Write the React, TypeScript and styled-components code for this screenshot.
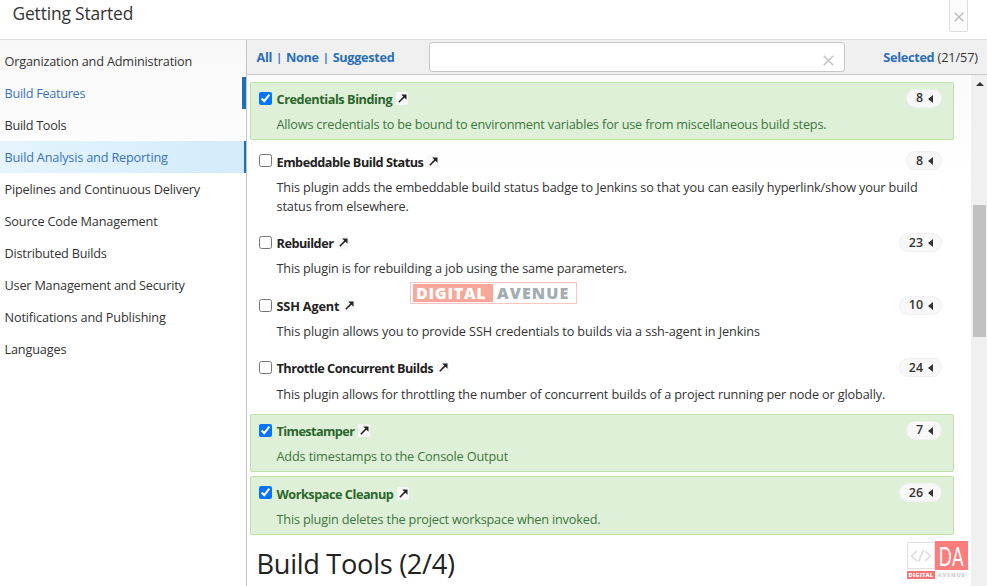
import React from "react";
import styled, { createGlobalStyle } from "styled-components";

const GlobalStyle = createGlobalStyle`
  * { box-sizing: border-box; }
  body {
    margin: 0;
    overflow: hidden;
    background: #fff;
    color: #333;
    font-family: "Open Sans", "Noto Sans", sans-serif;
    font-size: 12.7px;
  }
`;

const Dialog = styled.div`
  display: flex;
  flex-direction: column;
  width: 987px;
  height: 586px;
  overflow: hidden;
`;

const Header = styled.header`
  display: flex;
  justify-content: space-between;
  align-items: flex-start;
  flex: 0 0 40px;
  padding: 0 19px 0 12.5px;
  border-bottom: 1px solid #ddd;
`;

const DialogTitle = styled.h1`
  margin: 0;
  font-size: 17.4px;
  font-weight: 400;
  line-height: 26px;
  letter-spacing: -0.15px;
  color: #333;
`;

const CloseButton = styled.button`
  display: flex;
  align-items: flex-end;
  justify-content: center;
  width: 19px;
  height: 32px;
  padding: 0 0 9px;
  border: 1px solid #ddd;
  border-top: 0;
  border-radius: 0 0 2px 2px;
  background: #fcfcfc;
  color: #bbb;
`;

const Body = styled.div`
  display: flex;
  flex: 1;
  min-height: 0;
`;

const Sidebar = styled.nav`
  flex: 0 0 247px;
  padding-top: 5px;
  border-right: 1px solid #c6c6c6;
  background: linear-gradient(#f8f8f8, #fff 150px);
`;

const Category = styled.a<{ $bar?: number; $hover?: boolean; $ls?: number }>`
  display: block;
  height: 32px;
  padding-left: 4.5px;
  line-height: 32px;
  white-space: nowrap;
  letter-spacing: ${(p) => p.$ls ?? -0.2}px;
  color: ${(p) => (p.$bar ? "#3a74b8" : "#333")};
  border-right: ${(p) => p.$bar ?? 0}px solid #1f6fb5;
  background: ${(p) => (p.$hover ? "linear-gradient(90deg, #e6f4fd, #d3ebfa)" : "transparent")};
`;

const Main = styled.main`
  display: flex;
  flex-direction: column;
  flex: 1;
  min-width: 0;
`;

const Toolbar = styled.div`
  display: flex;
  align-items: center;
  flex: 0 0 35px;
  padding: 0 9px 0 9.5px;
  border-bottom: 1px solid #c8c8c8;
  background: #f0f0f0;
`;

const Filters = styled.div`
  display: flex;
  width: 172.5px;
  gap: 4.2px;
  color: #2a6fb5;
  font-weight: 700;
  letter-spacing: -0.3px;
`;

const Divider = styled.span`
  font-size: 10.5px;
  line-height: 18px;
`;

const SearchBox = styled.div`
  display: flex;
  align-items: center;
  justify-content: flex-end;
  width: 416px;
  height: 30px;
  padding: 6px 10px 0 0;
  border: 1px solid #c6c6c6;
  border-radius: 3px;
  background: #fff;
  color: #c4c4c4;
`;

const Selected = styled.div`
  margin-left: auto;
  letter-spacing: -0.1px;
  b { color: #2a6fb5; font-weight: 700; letter-spacing: -0.3px; }
`;

const Content = styled.div`
  display: flex;
  flex: 1;
  min-height: 0;
`;

const Plugins = styled.section`
  flex: 1;
  padding: 6.7px 17px 0 3px;
  background: linear-gradient(#fbfbfb, #fff 110px);
`;

const Plugin = styled.article<{ $on?: boolean }>`
  display: grid;
  grid-template-columns: 17.5px 1fr auto;
  margin-bottom: 4px;
  padding: 6.2px 11.5px 3px 8px;
  border: 1px solid ${(p) => (p.$on ? "#bfe0a8" : "transparent")};
  border-radius: 2px;
  background: ${(p) => (p.$on ? "#dff0d8" : "transparent")};
  color: ${(p) => (p.$on ? "#3c763d" : "#333")};
`;

const Check = styled.input`
  width: 13px;
  height: 13px;
  margin: 3px 0 0;
`;

const PluginTitle = styled.h3<{ $on?: boolean; $ls: number }>`
  display: flex;
  align-items: center;
  height: 20.4px;
  gap: 4px;
  margin: 0;
  font-size: 12.7px;
  font-weight: 700;
  letter-spacing: ${(p) => p.$ls}px;
  color: ${(p) => (p.$on ? "#2b662c" : "#222")};
`;

const ExternalLink = styled.span`
  display: flex;
  align-items: center;
  justify-content: center;
  width: 12px;
  height: 13px;
  margin-top: -1px;
  border-radius: 2px;
  background: #f8f8f8;
`;

const Badge = styled.span`
  display: flex;
  align-items: center;
  justify-content: flex-end;
  gap: 4.5px;
  height: 19px;
  padding: 0 8px 1px 9px;
  border: 1px solid #f0f0f0;
  border-radius: 10px;
  background: #f8f8f8;
  color: #333;
  font-size: 12.4px;
  font-weight: 600;
`;

const Arrow = styled.i`
  margin-top: 2px;
  border: 4px solid transparent;
  border-right: 5px solid #333;
  border-left: 0;
`;

const Description = styled.p<{ $ls: number }>`
  grid-column: 2 / 4;
  margin: 0;
  padding: 6px 0 2px;
  line-height: 19px;
  white-space: pre;
  letter-spacing: ${(p) => p.$ls}px;
`;

const SectionTitle = styled.h2`
  margin: 8px 0 0 6.5px;
  font-size: 27.2px;
  font-weight: 400;
  line-height: 41px;
  letter-spacing: -0.3px;
  color: #222;
`;

const ScrollTrack = styled.div`
  display: flex;
  flex-direction: column;
  align-items: center;
  flex: 0 0 16px;
  padding-top: 7px;
  background: #f0f0f0;
`;

const ScrollUp = styled.i`
  margin-left: 1px;
  border: 4px solid transparent;
  border-top: 0;
  border-bottom: 4px solid #333;
`;

const Thumb = styled.div`
  width: 13px;
  height: 132px;
  margin: 119px 0 0 1px;
  background: #c1c1c1;
`;

const Watermark = styled.div`
  position: absolute;
  left: 410px;
  top: 282px;
  display: flex;
  width: 167px;
  height: 22px;
  padding: 1px 2px;
  border: 1px solid #f8c4bf;
  background: #fff;
  color: #a2acb3;
  font-size: 16px;
  font-weight: 800;
  line-height: 19px;
`;

const WatermarkLead = styled.span`
  width: 80px;
  height: 18px;
  padding-left: 3px;
  background: #f9a79a;
  color: #fff;
  letter-spacing: 0.75px;
`;

const WatermarkTail = styled.span`
  padding-left: 4px;
  letter-spacing: 1.1px;
`;

const Logo = styled.div`
  position: absolute;
  left: 907px;
  top: 541px;
  display: grid;
  grid-template-columns: 28px 33px;
  grid-template-rows: 29px 9px;
  background: #fff;
`;

const CodeTile = styled.div`
  display: flex;
  align-items: center;
  justify-content: center;
  height: 27px;
  margin-top: 1px;
  border: 1px solid #e2e2e2;
`;

const InitialsTile = styled.div`
  display: flex;
  align-items: center;
  justify-content: center;
  background: #fd7c7c;
  color: #fff;
  font-size: 28px;
  line-height: 28px;
`;

const Initials = styled.span`
  display: block;
  height: 28px;
  transform: scaleX(0.62);
  white-space: nowrap;
  font-family: Lato, sans-serif;
  font-size: 27.5px;
  letter-spacing: 1px;
`;

const LogoCaption = styled.span<{ $red?: boolean }>`
  height: 8px;
  margin-top: 1px;
  text-align: center;
  white-space: nowrap;
  font-size: 5.6px;
  font-weight: 800;
  line-height: 8px;
  letter-spacing: ${(p) => (p.$red ? 0.3 : 0.8)}px;
  color: ${(p) => (p.$red ? "#fff" : "#d4d4d4")};
  background: ${(p) => (p.$red ? "#f47373" : "#fafafa")};
`;

const Cross = ({ size, width = 1.4 }: { size: number; width?: number }) => (
  <svg width={size} height={size} viewBox="0 0 10 10" fill="none" stroke="currentColor" strokeWidth={width}>
    <path d="M.7.7l8.6 8.6M9.3.7L.7 9.3" />
  </svg>
);

const categories = [
  { name: "Organization and Administration", ls: -0.17 },
  { name: "Build Features", ls: -0.3, bar: 4 },
  { name: "Build Tools", ls: -0.3 },
  { name: "Build Analysis and Reporting", ls: -0.18, bar: 2, hover: true },
  { name: "Pipelines and Continuous Delivery", ls: -0.18 },
  { name: "Source Code Management", ls: -0.15 },
  { name: "Distributed Builds", ls: -0.2 },
  { name: "User Management and Security", ls: -0.2 },
  { name: "Notifications and Publishing", ls: -0.14 },
  { name: "Languages", ls: -0.15 },
];

const plugins = [
  { name: "Credentials Binding", count: 8, on: true, tls: -0.43, ls: -0.195, text: "Allows credentials to be bound to environment variables for use from miscellaneous build steps." },
  { name: "Embeddable Build Status", count: 8, tls: -0.47, ls: -0.14, text: "This plugin adds the embeddable build status badge to Jenkins so that you can easily hyperlink/show your build\nstatus from elsewhere." },
  { name: "Rebuilder", count: 23, tls: -0.48, ls: -0.165, text: "This plugin is for rebuilding a job using the same parameters." },
  { name: "SSH Agent", count: 10, tls: -0.17, ls: -0.11, text: "This plugin allows you to provide SSH credentials to builds via a ssh-agent in Jenkins" },
  { name: "Throttle Concurrent Builds", count: 24, tls: -0.49, ls: -0.145, text: "This plugin allows for throttling the number of concurrent builds of a project running per node or globally." },
  { name: "Timestamper", count: 7, on: true, tls: -0.6, ls: -0.15, text: "Adds timestamps to the Console Output" },
  { name: "Workspace Cleanup", count: 26, on: true, tls: -0.47, ls: -0.17, text: "This plugin deletes the project workspace when invoked." },
];

export default function App() {
  return (
    <Dialog>
      <GlobalStyle />
      <Header>
        <DialogTitle>Getting Started</DialogTitle>
        <CloseButton aria-label="Close"><Cross size={10} /></CloseButton>
      </Header>
      <Body>
        <Sidebar>
          {categories.map((c) => (
            <Category key={c.name} $bar={c.bar} $hover={c.hover} $ls={c.ls}>{c.name}</Category>
          ))}
        </Sidebar>
        <Main>
          <Toolbar>
            <Filters>
              <span>All</span><Divider>|</Divider><span>None</span><Divider>|</Divider><span>Suggested</span>
            </Filters>
            <SearchBox><Cross size={11} /></SearchBox>
            <Selected><b>Selected</b> (21/57)</Selected>
          </Toolbar>
          <Content>
            <Plugins>
              {plugins.map((p) => (
                <Plugin key={p.name} $on={p.on}>
                  <Check type="checkbox" checked={!!p.on} readOnly />
                  <PluginTitle $on={p.on} $ls={p.tls}>
                    {p.name}
                    <ExternalLink>
                      <svg width="9" height="9" viewBox="0 0 9 9" fill="none" stroke="#222" strokeWidth="1.5">
                        <path d="M.8 8.2L6.6 2.4" />
                        <path d="M3.2.5h5.3v5.3z" fill="#222" stroke="none" />
                      </svg>
                    </ExternalLink>
                  </PluginTitle>
                  <Badge>{p.count}<Arrow /></Badge>
                  <Description $ls={p.ls}>{p.text}</Description>
                </Plugin>
              ))}
              <SectionTitle>Build Tools (2/4)</SectionTitle>
            </Plugins>
            <ScrollTrack><ScrollUp /><Thumb /></ScrollTrack>
          </Content>
        </Main>
      </Body>
      <Watermark>
        <WatermarkLead>DIGITAL</WatermarkLead>
        <WatermarkTail>AVENUE</WatermarkTail>
      </Watermark>
      <Logo>
        <CodeTile>
          <svg width="22" height="14" viewBox="0 0 22 14" fill="none" stroke="#dcdcdc" strokeWidth="1.5">
            <path d="M7 2L1.5 7 7 12M15 2l5.500 5L15 12M13.500 1l-5 12" />
          </svg>
        </CodeTile>
        <InitialsTile><Initials>DA</Initials></InitialsTile>
        <LogoCaption $red>DIGITAL</LogoCaption>
        <LogoCaption>AVENUE</LogoCaption>
      </Logo>
    </Dialog>
  );
}
